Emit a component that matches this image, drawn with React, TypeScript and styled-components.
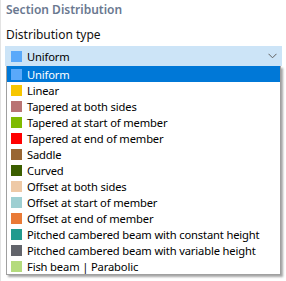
import React from "react";
import styled, { createGlobalStyle } from "styled-components";

const Global = createGlobalStyle`
  html, body { margin: 0; padding: 0; background: #ffffff; }
  body { font-family: "Segoe UI", "Noto Sans", "Open Sans", sans-serif; font-size: 12px; }
`;

const Panel = styled.div`
  box-sizing: border-box;
  width: 286px;
  height: 281px;
  border-left: 1px solid #e3e3e3;
  padding: 1px 4px 0 4px;
  color: #1a1a1a;
`;

const Title = styled.div`
  font-weight: 600;
  font-size: 12px;
  line-height: 17px;
  color: #6a7890;
  padding-left: 1px;
`;

const Label = styled.div`
  margin-top: 8px;
  font-size: 12px;
  line-height: 17px;
  padding-left: 1px;
  color: #111111;
`;

const Combo = styled.div`
  position: relative;
  margin-top: 3px;
  width: 277px;
`;

const ComboBox = styled.div`
  box-sizing: border-box;
  height: 20px;
  display: flex;
  align-items: center;
  gap: 5px;
  padding: 0 5px 0 6px;
  background: #cce4f7;
  font-size: 11.2px;
  letter-spacing: -0.15px;
  color: #000;
`;

const Swatch = styled.span<{ $c: string }>`
  flex: none;
  width: 11px;
  height: 11px;
  background: ${(p) => p.$c};
`;

const Text = styled.span`
  flex: 1;
  white-space: nowrap;
`;

const Chevron = styled.svg`
  flex: none;
  width: 9px;
  height: 6px;
`;

const List = styled.ul`
  position: absolute;
  top: 20px;
  left: 1px;
  box-sizing: border-box;
  width: 275px;
  margin: 0;
  padding: 0;
  list-style: none;
  background: #ffffff;
  border: 1px solid #a0a0a0;
  border-top: none;
  box-shadow: 2px 2px 2px rgba(0, 0, 0, 0.35);
`;

const Row = styled.li<{ $sel?: boolean }>`
  display: flex;
  align-items: center;
  gap: 5px;
  height: 16px;
  padding-left: 4px;
  font-size: 11.2px;
  letter-spacing: -0.15px;
  color: ${(p) => (p.$sel ? "#ffffff" : "#000000")};
  background: ${(p) => (p.$sel ? "#0078d7" : "transparent")};
`;

const items: { label: string; color: string }[] = [
  { label: "Uniform", color: "#5aa9fa" },
  { label: "Linear", color: "#f7c600" },
  { label: "Tapered at both sides", color: "#b97474" },
  { label: "Tapered at start of member", color: "#7fbb00" },
  { label: "Tapered at end of member", color: "#ff0000" },
  { label: "Saddle", color: "#996633" },
  { label: "Curved", color: "#3b5e00" },
  { label: "Offset at both sides", color: "#eec9a6" },
  { label: "Offset at start of member", color: "#9ecfd2" },
  { label: "Offset at end of member", color: "#e97a36" },
  { label: "Pitched cambered beam with constant height", color: "#219a8e" },
  { label: "Pitched cambered beam with variable height", color: "#62646b" },
  { label: "Fish beam | Parabolic", color: "#b4db7d" },
];

export default function App() {
  return (
    <>
      <Global />
      <Panel>
        <Title>Section Distribution</Title>
        <Label>Distribution type</Label>
        <Combo>
          <ComboBox>
            <Swatch $c="#5aa9fa" />
            <Text>Uniform</Text>
            <Chevron viewBox="0 0 9 6">
              <path d="M0.5 0.8 L4.5 4.8 L8.5 0.8" fill="none" stroke="#5f5f5f" strokeWidth="1" />
            </Chevron>
          </ComboBox>
          <List>
            {items.map((it, i) => (
              <Row key={it.label} $sel={i === 0}>
                <Swatch $c={it.color} />
                <Text>{it.label}</Text>
              </Row>
            ))}
          </List>
        </Combo>
      </Panel>
    </>
  );
}
